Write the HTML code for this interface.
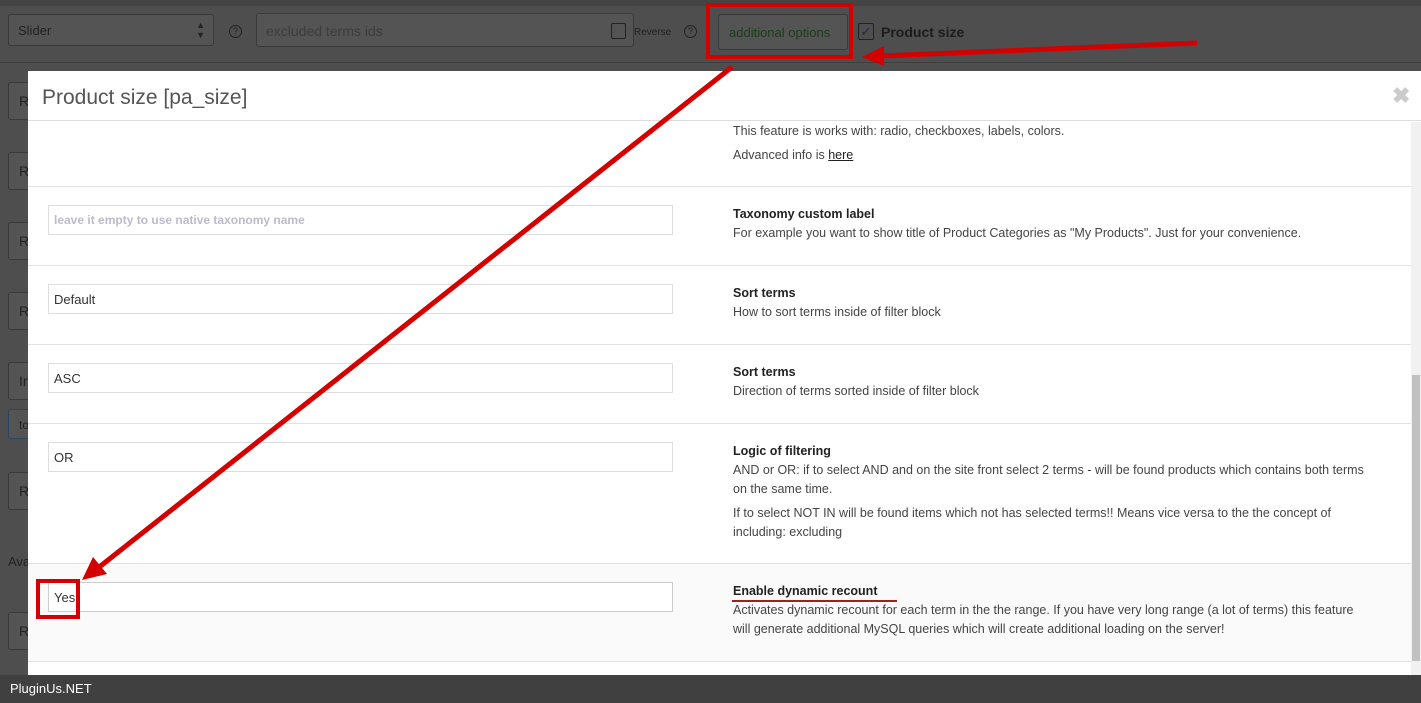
<!DOCTYPE html>
<html><head><style>
*{box-sizing:border-box;margin:0;padding:0}
body{width:1421px;height:703px;overflow:hidden;background:#4e4e4e;font-family:"Liberation Sans",sans-serif;position:relative;font-size:13px}
.a{position:absolute}
.din{position:absolute;border:1px solid #3a3a3a;border-radius:3px;background:#545454;color:#222}
.modal{position:absolute;left:28px;top:71px;width:1393px;height:604px;background:#fff;overflow:hidden}
.row{position:absolute;left:0;width:1383px;border-bottom:1px solid #e2e2e2}
.inp{position:absolute;left:20px;width:625px;height:30px;border:1px solid #ddd;background:#fff;font-size:13px;color:#333;padding:7px 5px}
.t{position:absolute;left:705px;font-size:12.5px;color:#444;line-height:19px;width:640px}
.t b{color:#222}
</style></head><body>
<div class="a" style="left:0;top:0;width:1421px;height:6px;background:#444"></div>
<div class="din" style="left:8px;top:14px;width:206px;height:32px;color:#222;padding:8px 9px">Slider<span style="position:absolute;right:8px;top:5px;font-size:9px;line-height:10px">▲<br>▼</span></div>
<div class="a" style="left:229px;top:25px;width:13px;height:13px;border:1px solid #222;border-radius:50%;font-size:9px;text-align:center;line-height:11px;color:#222">?</div>
<div class="din" style="left:256px;top:13px;width:378px;height:34px;color:#3c3c3c;padding:9px 9px;font-size:14px">excluded terms ids</div>
<div class="a" style="left:611px;top:23px;width:15px;height:16px;border:1px solid #222;border-radius:2px"></div>
<div class="a" style="left:634px;top:27px;font-size:10px;color:#222">Reverse</div>
<div class="a" style="left:684px;top:25px;width:13px;height:13px;border:1px solid #222;border-radius:50%;font-size:9px;text-align:center;line-height:11px;color:#222">?</div>
<div class="din" style="left:718px;top:14px;width:130px;height:36px;padding:10px 10px;color:#1b3d1b;font-size:13px">additional options</div>
<div class="a" style="left:858px;top:23px;width:16px;height:17px;border:1px solid #222;border-radius:2px;color:#1a2a4a;font-size:13px;line-height:15px;text-align:center">✓</div>
<div class="a" style="left:881px;top:24px;font-size:14px;font-weight:bold;color:#1c1c1c">Product size</div>
<div class="a" style="left:0;top:62px;width:1421px;height:1px;background:#3f3f3f"></div>
<div class="din" style="left:8px;top:82px;width:40px;height:38px;padding:10px 10px;font-size:14px">R</div>
<div class="din" style="left:8px;top:152px;width:40px;height:38px;padding:10px 10px;font-size:14px">R</div>
<div class="din" style="left:8px;top:222px;width:40px;height:38px;padding:10px 10px;font-size:14px">R</div>
<div class="din" style="left:8px;top:292px;width:40px;height:38px;padding:10px 10px;font-size:14px">R</div>
<div class="din" style="left:8px;top:362px;width:40px;height:38px;padding:10px 10px;font-size:14px">In</div>
<div class="din" style="left:8px;top:409px;width:40px;height:30px;padding:8px 10px;font-size:12px;border-color:#2b4560">to</div>
<div class="din" style="left:8px;top:472px;width:40px;height:38px;padding:10px 10px;font-size:14px">R</div>
<div class="a" style="left:8px;top:554px;font-size:13px;color:#222">Ava</div>
<div class="din" style="left:8px;top:612px;width:40px;height:38px;padding:10px 10px;font-size:14px">R</div>

<div class="modal">
<div class="a" style="left:0;top:0;width:1393px;height:50px;border-bottom:1px solid #ddd"></div>
<div class="a" style="left:14px;top:15px;font-size:21px;color:#555;font-weight:300">Product size [pa_size]</div>
<div class="a" style="left:1364px;top:12px;font-size:22px;color:#ccc;font-weight:bold">✖</div>
<div class="a" style="left:1383px;top:51px;width:10px;height:553px;background:#f1f1f1"></div>
<div class="a" style="left:1384px;top:304px;width:8px;height:286px;background:#c1c1c1"></div>
<div class="row" style="top:51px;height:65px"><div class="t" style="top:0">This feature is works with: radio, checkboxes, labels, colors.</div><div class="t" style="top:24px">Advanced info is <u style="color:#222">here</u></div></div>
<div class="row" style="top:116px;height:79px"><div class="inp" style="top:18px;color:#bbc;font-weight:bold;font-size:12px">leave it empty to use native taxonomy name</div><div class="t" style="top:18px"><b>Taxonomy custom label</b><br>For example you want to show title of Product Categories as "My Products". Just for your convenience.</div></div>
<div class="row" style="top:195px;height:79px"><div class="inp" style="top:18px">Default</div><div class="t" style="top:18px"><b>Sort terms</b><br>How to sort terms inside of filter block</div></div>
<div class="row" style="top:274px;height:79px"><div class="inp" style="top:18px">ASC</div><div class="t" style="top:18px"><b>Sort terms</b><br>Direction of terms sorted inside of filter block</div></div>
<div class="row" style="top:353px;height:140px"><div class="inp" style="top:18px">OR</div><div class="t" style="top:18px"><b>Logic of filtering</b><br>AND or OR: if to select AND and on the site front select 2 terms - will be found products which contains both terms on the same time.</div><div class="t" style="top:80px">If to select NOT IN will be found items which not has selected terms!! Means vice versa to the the concept of including: excluding</div></div>
<div class="row" style="top:493px;height:98px;background:#fafafa"><div class="inp" style="top:18px;border-color:#ccc">Yes</div><div class="t" style="top:18px"><b>Enable dynamic recount</b><br>Activates dynamic recount for each term in the the range. If you have very long range (a lot of terms) this feature will generate additional MySQL queries which will create additional loading on the server!</div></div>
</div>
<div class="a" style="left:732px;top:600px;width:165px;height:2px;background:#a02020"></div>
<div class="a" style="left:0;top:675px;width:1421px;height:28px;background:#404040;color:#fff;font-size:13px;padding:6px 10px">PluginUs.NET</div>
<svg class="a" style="left:0;top:0" width="1421" height="703">
<rect x="708" y="5" width="143" height="52" fill="none" stroke="#d40000" stroke-width="4"/>
<rect x="38" y="581" width="40" height="36" fill="none" stroke="#d40000" stroke-width="4"/>
<line x1="1197" y1="43" x2="880" y2="56" stroke="#d40000" stroke-width="5"/>
<polygon points="862,57 884,46 884,66" fill="#d40000"/>
<line x1="732" y1="67" x2="98" y2="568" stroke="#d40000" stroke-width="5"/>
<polygon points="82,580 93,557 107,574" fill="#d40000"/>
</svg>
</body></html>
